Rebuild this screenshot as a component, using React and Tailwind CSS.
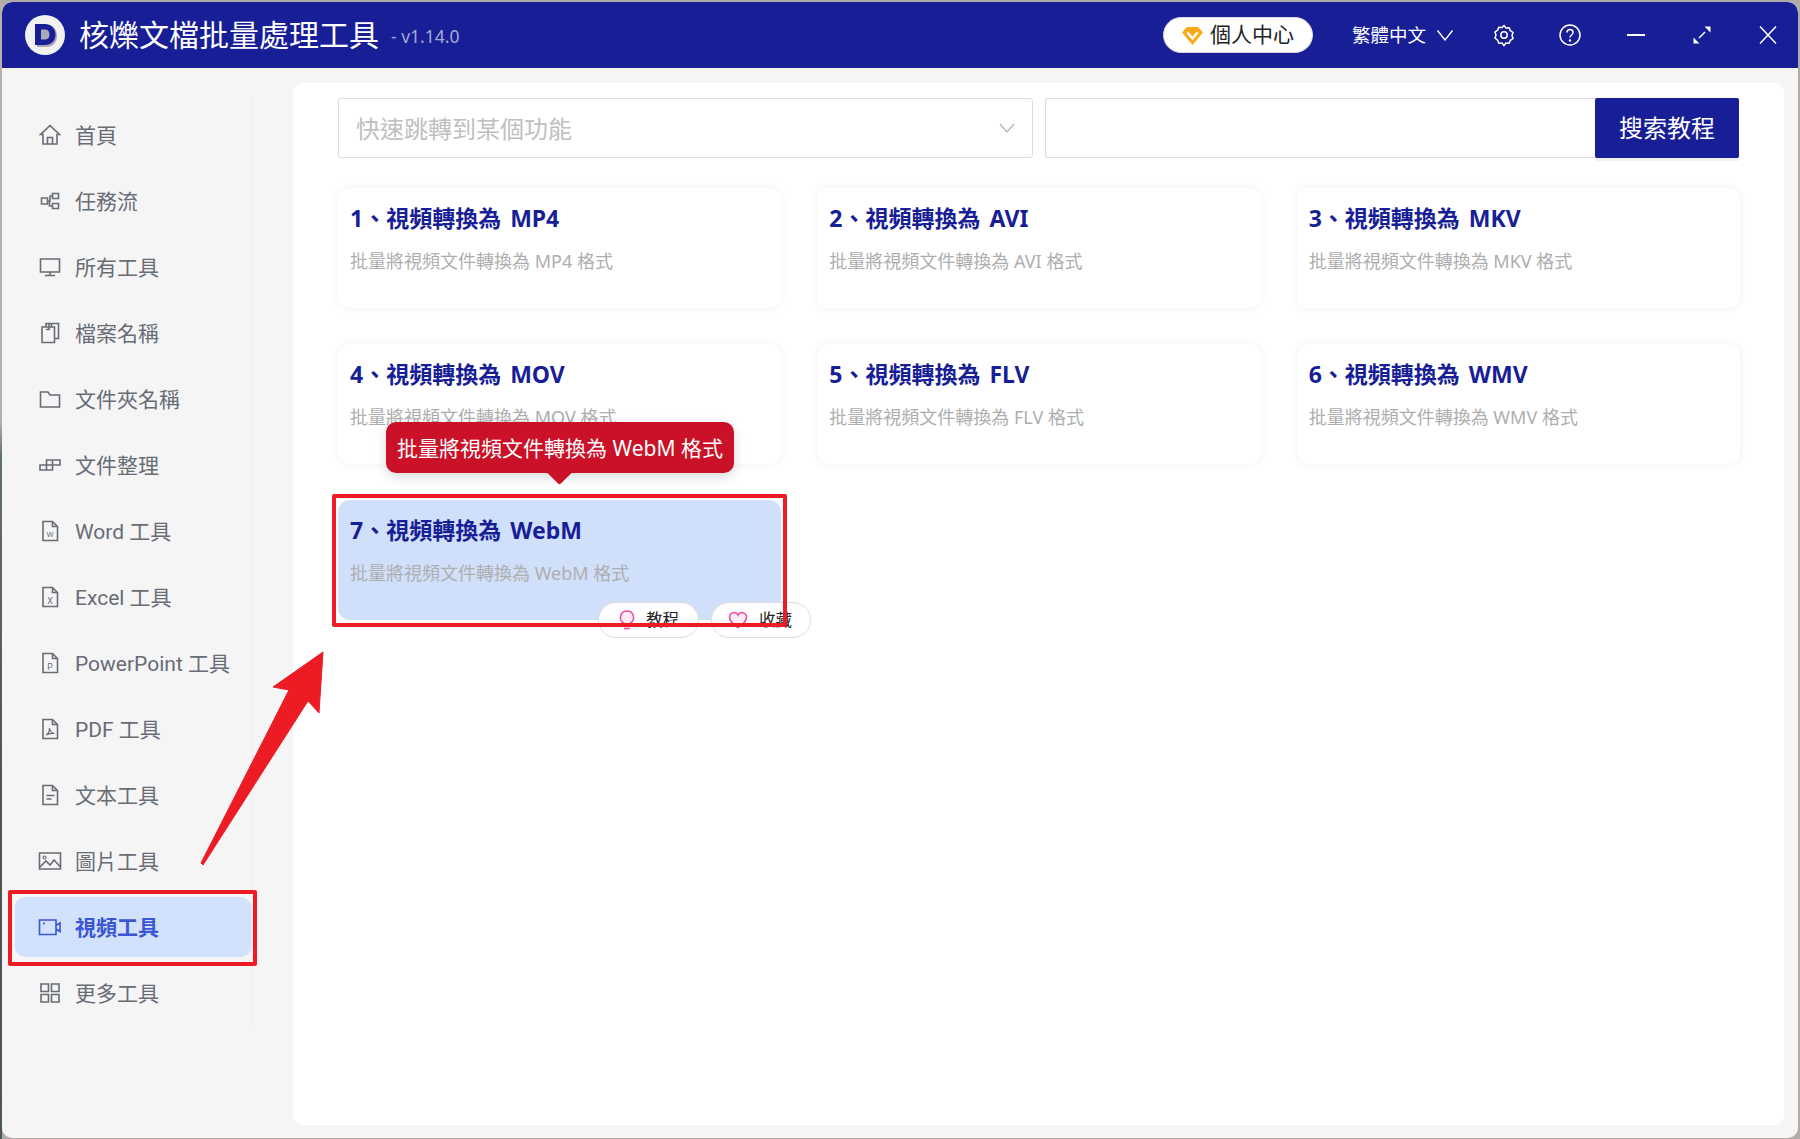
import React from 'react';

const FONT = 'font-["Noto_Sans","Noto_Sans_CJK_TC",sans-serif]';

const Ic = ({ children, active, w = 24, h = 24 }) => (
  <svg
    width={w}
    height={h}
    viewBox="0 0 24 24"
    fill="none"
    stroke={active ? '#3a56d4' : '#676c75'}
    strokeWidth="1.6"
    className="shrink-0"
  >
    {children}
  </svg>
);

const docPath = 'M5 2.5h9.5L19.5 7.5v14H5z M14.5 2.5v5h5';

const icons = {
  home: <path d="M12 2.5 2.5 11.5h2.5v9.5h14v-9.5h2.5z M9.5 21v-6.5h5V21" />,
  flow: <path d="M3.5 9h6v6h-6z M14.5 4.5h6v5h-6z M14.5 14.5h6v5h-6z M9.5 12h2.500V7h3 M11.500 12v5h3" />,
  monitor: <path d="M2.500 4h19v13h-19z M12 17v3.500 M7 20.500h10" />,
  files: <path d="M4 6h12.500v15.500H4z M8 6V2.500h12.500v15h-4 M11 2.500v6h-3 M13.500 2.500v3.500" />,
  folder: <path d="M2.500 5h7.500l2 3h9.500v12h-19z" />,
  stack: <path d="M2 12h6.500v5H2z M8.500 12h6v5h-6z M8.500 12V7h6v5 M14.500 7h7.500v5h-7.500" />,
  word: (
    <>
      <path d={docPath} />
      <text x="12" y="18" textAnchor="middle" fontSize="8" stroke="none" fill="#676c75">W</text>
    </>
  ),
  excel: (
    <>
      <path d={docPath} />
      <text x="12" y="18.500" textAnchor="middle" fontSize="9" stroke="none" fill="#676c75">X</text>
    </>
  ),
  ppt: (
    <>
      <path d={docPath} />
      <text x="12" y="18.500" textAnchor="middle" fontSize="8.500" stroke="none" fill="#676c75">P</text>
    </>
  ),
  pdf: (
    <>
      <path d={docPath} />
      <path d="M8 18c2-1 3.500-4 3.500-7 .5 3 2 5 5 5.500-3-.5-6 0-8.500 1.500z" strokeWidth="1.200" />
    </>
  ),
  text: (
    <>
      <path d={docPath} />
      <path d="M8.500 12.500h8 M8.500 16h5" />
    </>
  ),
  image: (
    <>
      <path d="M1.500 4h21v16h-21z" />
      <circle cx="6.500" cy="8.500" r="1.500" strokeWidth="1.200" />
      <path d="M2 18l6-6 4 4 4-5 6.500 7" />
    </>
  ),
  video: (
    <>
      <path d="M1.500 5h16.500v14.500H1.500z M18 10.500l4-2.500v8.500l-4-2.500 M5 8.500h2" />
    </>
  ),
  grid: <path d="M3 3h7.500v7.500H3z M13.500 3H21v7.500h-7.500z M3 13.500h7.500V21H3z M13.500 13.500H21V21h-7.500z" />,
};

const menu = [
  ['home', '首頁'],
  ['flow', '任務流'],
  ['monitor', '所有工具'],
  ['files', '檔案名稱'],
  ['folder', '文件夾名稱'],
  ['stack', '文件整理'],
  ['word', 'Word 工具'],
  ['excel', 'Excel 工具'],
  ['ppt', 'PowerPoint 工具'],
  ['pdf', 'PDF 工具'],
  ['text', '文本工具'],
  ['image', '圖片工具'],
  ['video', '視頻工具', true],
  ['grid', '更多工具'],
];

const formats = ['MP4', 'AVI', 'MKV', 'MOV', 'FLV', 'WMV', 'WebM'];

const WinIcon = ({ children }) => (
  <div className="w-[66px] flex justify-center">
    <svg width="24" height="24" viewBox="0 0 24 24" fill="none" stroke="#fff" strokeWidth="1.500">
      {children}
    </svg>
  </div>
);

const Header = () => (
  <header className="h-[66px] shrink-0 bg-[#171e96] rounded-t-[10px] flex items-center pl-[23px] text-white">
    <svg width="40" height="40" viewBox="0 0 40 40" className="shrink-0">
      <circle cx="20" cy="20" r="20" fill="#f1f1f1" />
      <path d="M12 10h9c7 0 11 4.500 11 11s-4 11-11 11h-9z" fill="#a9a9b5" />
      <path fill="#171e96" fillRule="evenodd" d="M10 9h9.500c7 0 11 4.500 11 10.500S26.500 30 19.500 30H10z M16 14.500v10h3.500c3.500 0 5-2 5-5s-1.500-5-5-5z" />
    </svg>
    <h1 className="ml-[14px] text-[30px] leading-[40px] font-normal whitespace-nowrap">核爍文檔批量處理工具</h1>
    <span className="ml-[12px] mt-[3px] text-[17.500px] text-[#a6a9d6] whitespace-nowrap">- v1.14.0</span>

    <div className="ml-auto mr-[-3px] flex items-center">
      <div className="w-[150px] h-[36px] rounded-full bg-white border border-[#d8d8d8] flex items-center pl-[18px] text-[#222] text-[21px]">
        <svg width="21" height="19" viewBox="0 0 21 19" className="shrink-0">
          <path d="M5 1h11l5 5.500L10.500 19 0 6.500z" fill="#f9ab17" />
          <path d="M5.500 6.500l5 6 5-6" fill="none" stroke="#fff" strokeWidth="2.400" />
        </svg>
        <span className="ml-[7px] whitespace-nowrap">個人中心</span>
      </div>
      <span className="ml-[39px] text-[18.500px] whitespace-nowrap">繁體中文</span>
      <svg width="18" height="12" viewBox="0 0 18 12" fill="none" stroke="#fff" strokeWidth="1.400" className="ml-[10px] mr-[17px]">
        <path d="M1.500 1.500 9 11l7.500-9.500" />
      </svg>
      <WinIcon>
        <path d="M12 2.500l2 2.500 3.200-.3 1.200 3 2.600 1.800-1 3 1 3-2.600 1.800-1.200 3-3.200-.3-2 2.500-2-2.500-3.200.3-1.200-3L3 15l1-3-1-3 2.600-1.800 1.200-3 3.200.3z" />
        <circle cx="12" cy="12" r="3.200" />
      </WinIcon>
      <WinIcon>
        <circle cx="12" cy="12" r="10" />
        <path d="M9 9.500c0-4 6-4 6 0 0 2.500-3 2.500-3 5" />
        <circle cx="12" cy="17.500" r=".5" />
      </WinIcon>
      <WinIcon>
        <path d="M3 12h18" strokeWidth="2" />
      </WinIcon>
      <WinIcon>
        <path d="M15 9l-6 6" />
        <path d="M14.500 3.500h6v6z M3.500 14.500v6h6z" fill="#fff" stroke="none" />
      </WinIcon>
      <WinIcon>
        <path d="M4 3.500l16 17 M20 3.500l-16 17" />
      </WinIcon>
    </div>
  </header>
);

const Sidebar = () => (
  <aside className="w-[291px] shrink-0 pl-[13px] pt-[30px]">
    <nav className="w-[237px] h-[927px] pt-[7px] border-r border-[#efefef]">
      {menu.map(([icon, label, active]) => (
        <div
          key={label}
          className={`relative h-[60px] mb-[6px] w-[236px] rounded-[10px] flex items-center pl-[23px] text-[21px] font-["Roboto","Noto_Sans_CJK_TC",sans-serif] ${
            active ? 'bg-[#d2e2fc] text-[#3a56d4] font-bold' : 'text-[#676c75]'
          }`}
        >
          <Ic active={active}>{icons[icon]}</Ic>
          <span className="ml-[13px] mt-[3px] whitespace-nowrap">{label}</span>
          {active && (
            <div className="absolute left-[-7px] top-[-7px] right-[-6px] bottom-[-9px] border-[4px] border-[#ed1c24] rounded-[2px]" />
          )}
        </div>
      ))}
    </nav>
  </aside>
);

const Card = ({ n, fmt }) => {
  const hot = fmt === 'WebM';
  return (
    <div className={`relative h-[120px] rounded-[12px] pl-[12px] pt-[14px] ${hot ? 'bg-[#d0e0fb]' : 'bg-white shadow-[0_0_10px_rgba(0,0,0,0.06)]'}`}>
      <div className="h-[32px] leading-[32px] text-[23px] font-bold text-[#171e96] whitespace-nowrap [word-spacing:3px]">
        {n}、視頻轉換為 {fmt}
      </div>
      <div className="mt-[13px] leading-[28px] text-[18px] text-[#aeaeae] whitespace-nowrap">
        批量將視頻文件轉換為 {fmt} 格式
      </div>
      {hot && (
        <>
          <div className="absolute left-[48px] top-[-78px] z-10 w-[348px] h-[51px] rounded-[10px] bg-[#cb1128] text-white text-[21px] flex items-center justify-center shadow-[0_4px_12px_rgba(0,0,0,0.15)] whitespace-nowrap">
            <span className="mt-[2px]">批量將視頻文件轉換為 WebM 格式</span>
            <div className="absolute left-[164px] bottom-[-8px] w-[19px] h-[19px] rotate-45 bg-[#cb1128] rounded-[2px] -z-10" />
          </div>
          <div className="absolute left-[260px] top-[102px] flex gap-[12px] text-[16.500px] text-[#222]">
            <div className="w-[101px] h-[36px] rounded-full bg-white border border-[#ddd] flex items-center pl-[19px]">
              <svg width="18" height="22" viewBox="0 0 18 22" fill="#fdeef6" stroke="#ee4fa3" strokeWidth="1.600">
                <path d="M9 2a6.500 6.500 0 0 1 3.500 12v2h-7v-2A6.500 6.500 0 0 1 9 2z" />
                <path d="M6 19.500h6" />
              </svg>
              <span className="ml-[10px] mt-[1px]">教程</span>
            </div>
            <div className="w-[100px] h-[36px] rounded-full bg-white border border-[#ddd] flex items-center pl-[16px]">
              <svg width="20" height="18" viewBox="0 0 20 18" fill="#fdeef6" stroke="#ee4fa3" strokeWidth="1.600">
                <path d="M10 16.500C4 12.500 1.500 9.500 1.500 6.200 1.500 1 8 0 10 4.200 12 0 18.500 1 18.500 6.200c0 3.300-2.500 6.300-8.500 10.300z" />
              </svg>
              <span className="ml-[11px] mt-[1px]">收藏</span>
            </div>
          </div>
          <div className="absolute left-[-6px] top-[-6px] right-[-6px] bottom-[-7px] z-20 border-[4px] border-[#ed1c24] rounded-[2px]" />
        </>
      )}
    </div>
  );
};

const Main = () => (
  <main className="flex-1 mt-[15px] mb-[13px] mr-[14px] bg-white rounded-[10px] pt-[15px] pl-[45px] pr-[44px]">
    <div className="flex h-[60px] mb-[30px]">
      <div className="w-[695px] border border-[#dcdcdc] rounded-[3px] flex items-center justify-between pl-[17px] pr-[17px] text-[24px] text-[#c0c0c0]">
        <span className="mt-[1px]">快速跳轉到某個功能</span>
        <svg width="16" height="10" viewBox="0 0 16 10" fill="none" stroke="#b5b5b5" strokeWidth="1.300">
          <path d="M1 1l7 8 7-8" />
        </svg>
      </div>
      <div className="ml-[12px] flex-1 border border-[#dcdcdc] border-r-0 rounded-l-[3px]" />
      <button className="w-[144px] mr-[1px] bg-[#171e96] text-white text-[24px] rounded-[2px] shadow-[0_3px_0_#f0f0f0]">搜索教程</button>
    </div>
    <div className="grid grid-cols-3 gap-[36px]">
      {formats.map((f, i) => (
        <Card key={f} n={i + 1} fmt={f} />
      ))}
    </div>
  </main>
);

export default function App() {
  return (
    <div className={`relative w-[1800px] h-[1139px] overflow-hidden flex bg-[#b0acaa] ${FONT}`}>
      <div className="w-[2px] shrink-0 bg-[linear-gradient(to_bottom,#b8b0ac_0%,#b8b0ac_37%,#5f7076_40%,#5a4e4c_70%,#4a585e_100%)]" />
      <div className="flex-1 mt-[2px] mb-px mr-[2px] rounded-[10px] bg-[#f5f5f5] flex flex-col overflow-hidden">
        <Header />
        <div className="flex flex-1 min-h-0">
          <Sidebar />
          <Main />
        </div>
      </div>
      {/* annotation arrow */}
      <svg className="absolute left-0 top-0 z-30 pointer-events-none" width="1800" height="1139" viewBox="0 0 1800 1139">
        <path d="M323 652 273 687 289 690 201 863 203 865 308 701 319 713z" fill="#ed1c24" stroke="#ed1c24" strokeWidth="1" strokeLinejoin="round" />
      </svg>
    </div>
  );
}
